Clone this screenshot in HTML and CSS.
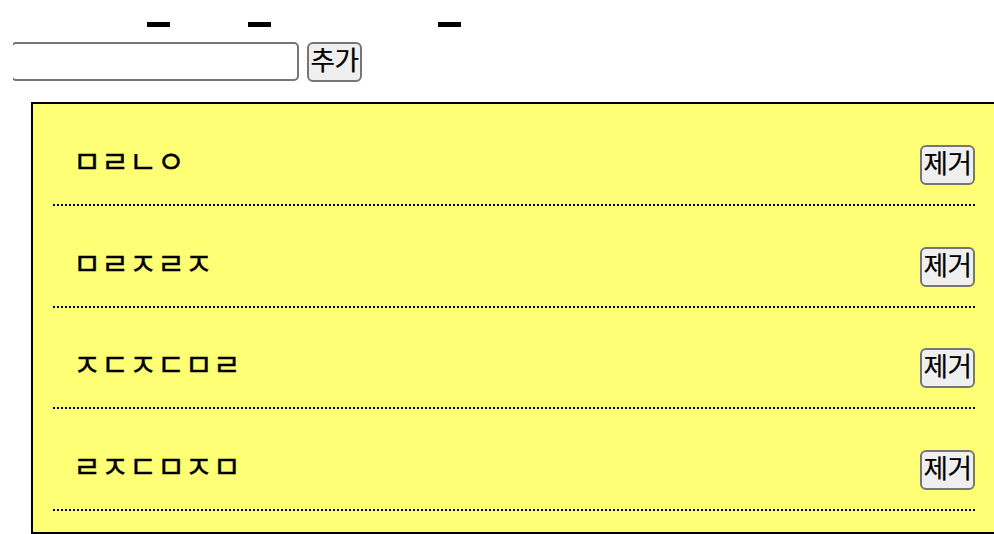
FILE: index.html
```html
<!DOCTYPE html>
<html lang="ko">
<head>
<meta charset="utf-8">
<title>Todo</title>
<link rel="stylesheet" href="styles.css">
</head>
<body>
<header class="heading"><span class="mark"></span><span class="mark"></span><span class="mark"></span></header>
<form class="entry"><div class="clip"><input class="field" type="text" aria-label="todo"></div><button class="btn" type="button">추가</button></form>
<ul class="list">
<li class="item"><span class="label">ㅁㄹㄴㅇ</span><button class="btn" type="button">제거</button></li>
<li class="item"><span class="label">ㅁㄹㅈㄹㅈ</span><button class="btn" type="button">제거</button></li>
<li class="item"><span class="label">ㅈㄷㅈㄷㅁㄹ</span><button class="btn" type="button">제거</button></li>
<li class="item"><span class="label">ㄹㅈㄷㅁㅈㅁ</span><button class="btn" type="button">제거</button></li>
</ul>
</body>
</html>
```
FILE: styles.css
```css
* { box-sizing: border-box; }
body {
  margin: 0;
  background: #fff;
  color: #000;
  font-family: "Liberation Sans", "Noto Sans CJK KR", sans-serif;
  overflow: hidden;
}
.heading {
  display: flex;
  height: 42px;
  padding: 22px 0 0 147px;
}
.mark {
  width: 23px;
  height: 5px;
  background: #000;
  margin-right: 78px;
}
.mark:nth-child(2) { margin-right: 167px; }
.entry {
  display: flex;
  align-items: flex-start;
  gap: 8px;
  height: 60px;
  margin: 0;
  padding-left: 13px;
}
.clip {
  display: flex;
  justify-content: flex-end;
  width: 286px;
  overflow: hidden;
}
.field {
  flex: none;
  width: 288px;
  height: 39px;
  border: 2px solid #767676;
  border-radius: 5px;
  background: #fff;
}
.btn {
  display: flex;
  justify-content: center;
  width: 55px;
  height: 40px;
  padding: 0;
  border: 2px solid #767676;
  border-radius: 6px;
  background: #efefef;
  color: #000;
  font: 26.67px/30px "Noto Sans CJK KR", sans-serif;
  letter-spacing: -0.5px;
  align-items: flex-start;
  -webkit-text-stroke: 0.2px #000;
}
.list {
  list-style: none;
  width: 965px;
  height: 432px;
  margin: 0 0 0 31px;
  padding: 0 20px;
  border: 2px solid #000;
  background: #ffff75;
}
.item {
  display: flex;
  justify-content: space-between;
  align-items: flex-start;
  width: 922px;
  height: 102px;
  padding: 41px 0 0 20px;
  border-bottom: 2px dotted #000;
}
.item:nth-child(3) {
  height: 101px;
  padding-top: 40px;
}
.label {
  font: 400 30.4px/31px "Noto Sans CJK KR", sans-serif;
  -webkit-text-stroke: 0.4px #000;
}
```
